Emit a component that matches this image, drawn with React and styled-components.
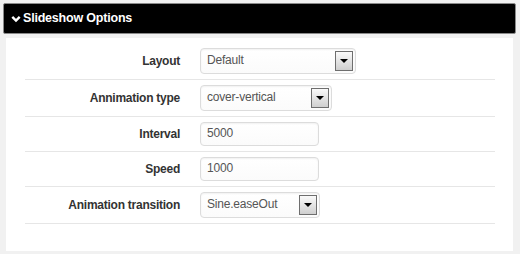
import React from "react";
import styled, { createGlobalStyle } from "styled-components";

const GlobalStyle = createGlobalStyle`
  html, body {
    margin: 0;
    padding: 0;
    background: #f1f1f1;
  }
  body {
    font-family: "Liberation Sans", Arial, sans-serif;
  }
`;

const fields = [
  { label: "Layout", type: "select", value: "Default", width: 156 },
  { label: "Annimation type", type: "select", value: "cover-vertical", width: 132 },
  { label: "Interval", type: "input", value: "5000", width: 119 },
  { label: "Speed", type: "input", value: "1000", width: 119 },
  { label: "Animation transition", type: "select", value: "Sine.easeOut", width: 120 },
];

const Chevron = () => (
  <svg width="10" height="8" viewBox="0 0 10 8">
    <path d="M1.3 1.8 L5 5.6 L8.7 1.8" fill="none" stroke="#fff" strokeWidth="2.4" />
  </svg>
);

const SelectBox = ({ value, width }) => (
  <Control $width={width} $height={26}>
    <Value>{value}</Value>
    <DropButton>
      <Arrow />
    </DropButton>
  </Control>
);

const App = () => (
  <Page>
    <GlobalStyle />
    <Header>
      <Chevron />
      <Title>Slideshow Options</Title>
    </Header>
    <Panel>
      {fields.map((f) => (
        <Row key={f.label}>
          <Label>{f.label}</Label>
          {f.type === "select" ? (
            <SelectBox value={f.value} width={f.width} />
          ) : (
            <Control $width={f.width} $height={24}>
              <Value>{f.value}</Value>
            </Control>
          )}
        </Row>
      ))}
    </Panel>
  </Page>
);

export default App;

const Page = styled.div`
  padding: 3px 4px 3px 3px;
  width: 520px;
  height: 254px;
  box-sizing: border-box;
`;

const Header = styled.div`
  height: 31px;
  box-sizing: border-box;
  background: #000;
  border: 1px solid #8a8a8a;
  border-radius: 2px;
  display: flex;
  align-items: center;
  gap: 2px;
  padding-left: 7px;
`;

const Title = styled.span`
  color: #fff;
  font-weight: bold;
  font-size: 12.5px;
  letter-spacing: -0.2px;
  position: relative;
  top: -1px;
`;

const Panel = styled.div`
  margin: 4px 3px 0 3px;
  background: #fff;
  padding: 5px 18px 27px 19px;
`;

const Row = styled.div`
  display: flex;
  align-items: center;
  gap: 20px;
  padding: 5px 0;
  border-bottom: 1px solid #e6e6e6;
`;

const Label = styled.div`
  width: 155px;
  text-align: right;
  font-size: 12px;
  font-weight: bold;
  letter-spacing: -0.25px;
  color: #333;
`;

const Control = styled.div`
  position: relative;
  width: ${(p) => p.$width}px;
  height: ${(p) => p.$height}px;
  box-sizing: border-box;
  border: 1px solid #dcdcdc;
  border-radius: 4px;
  background: linear-gradient(#fff, #fbfbfb);
  box-shadow: inset 0 1px 2px rgba(0, 0, 0, 0.06);
  display: flex;
  align-items: center;
  padding-left: 6px;
`;

const Value = styled.span`
  font-size: 12px;
  letter-spacing: -0.2px;
  color: #555;
  position: relative;
  top: -1px;
`;

const DropButton = styled.div`
  position: absolute;
  right: 2px;
  top: 2px;
  width: 18px;
  height: 20px;
  box-sizing: border-box;
  border: 1px solid #6e6e6e;
  background: linear-gradient(#fafafa, #cfcfcf);
  display: flex;
  align-items: center;
  justify-content: center;
`;

const Arrow = styled.div`
  width: 0;
  height: 0;
  border-left: 4px solid transparent;
  border-right: 4px solid transparent;
  border-top: 4px solid #000;
`;
